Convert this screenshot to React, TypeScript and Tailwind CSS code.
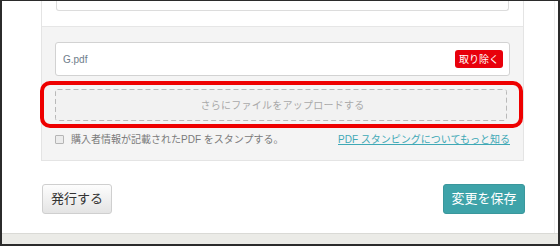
import React from "react";

const font = { fontFamily: '"Liberation Sans", "Noto Sans CJK JP", sans-serif' };

function DashedBox({ label }: { label: string }) {
  return (
    <div className="relative h-[32px] flex items-center justify-center bg-[#f2f2f2]">
      <svg className="absolute inset-0 w-full h-full" preserveAspectRatio="none">
        <rect x="0.5" y="0.5" width="451" height="31" rx="2" fill="none" stroke="#b9b9b9" strokeWidth="1" strokeDasharray="5 3" />
      </svg>
      <span className="relative text-[10px] tracking-[0.25px] text-[#a9a9a9]">{label}</span>
    </div>
  );
}

export default function App() {
  return (
    <div
      className="w-[560px] h-[246px] flex flex-col bg-white border-[#2b2b2b] border-t border-l-2 border-r-2 border-b-2"
      style={font}
    >
      <div className="flex-1 flex">
        <div className="ml-[39px] w-[483px] flex flex-col">
          {/* panel */}
          <div className="border-x border-b border-[#e4e4e4]">
            <div className="h-[26px] border-b border-[#e6e6e6] px-[14px]">
              <div className="h-[10px] border-x border-b border-[#dcdcdc] rounded-b-[3px]" />
            </div>
            <div className="bg-[#f4f4f4] px-[13px] pt-[15px] pb-[14px]">
              <div className="h-[34px] bg-white border border-[#d2d2d2] rounded-[3px] flex items-center justify-between pl-[7px] pr-[6px]">
                <span className="text-[10px] text-[#6e7d8a]">G.pdf</span>
                <span className="w-[48px] h-[18px] rounded-[3px] bg-[#e8000b] text-white text-[10px] flex items-center justify-center">
                  取り除く
                </span>
              </div>
              <div className="mt-[5px] ml-[-15px] mr-[-13px] border-4 border-[#ee0000] rounded-[10px] pl-[11px] pr-[9px] pt-[4px] pb-[3px]">
                <DashedBox label="さらにファイルをアップロードする" />
              </div>
              <div className="mt-[4px] h-[14px] flex items-center justify-between">
                <div className="flex items-center">
                  <span className="w-[9px] h-[9px] border border-[#b5b5b5] rounded-[1px] bg-[#ececec] mr-[7px]" />
                  <span className="text-[10px] text-[#7a7a7a]">購入者情報が記載されたPDF をスタンプする。</span>
                </div>
                <a className="text-[10px] text-[#3fa9b6] underline">PDF スタンピングについてもっと知る</a>
              </div>
            </div>
          </div>
          {/* actions */}
          <div className="mt-[23px] flex justify-between pl-[1px] mr-[-1px]">
            <button className="w-[70px] h-[30px] rounded-[3px] border border-[#cfcfcf] bg-gradient-to-b from-[#fdfdfd] to-[#e4e4e4] text-[13px] text-[#333]">
              発行する
            </button>
            <button className="w-[82px] h-[30px] rounded-[3px] border border-[#3a979c] bg-[#3ea3a9] text-[13px] text-white">
              変更を保存
            </button>
          </div>
        </div>
        <div className="flex-1 flex justify-end pr-[3px]">
          <div className="border-r border-[#efefef]" />
        </div>
      </div>
      <div className="h-[11px] border-t border-[#dadad6] bg-[#ebebe7]" />
    </div>
  );
}
